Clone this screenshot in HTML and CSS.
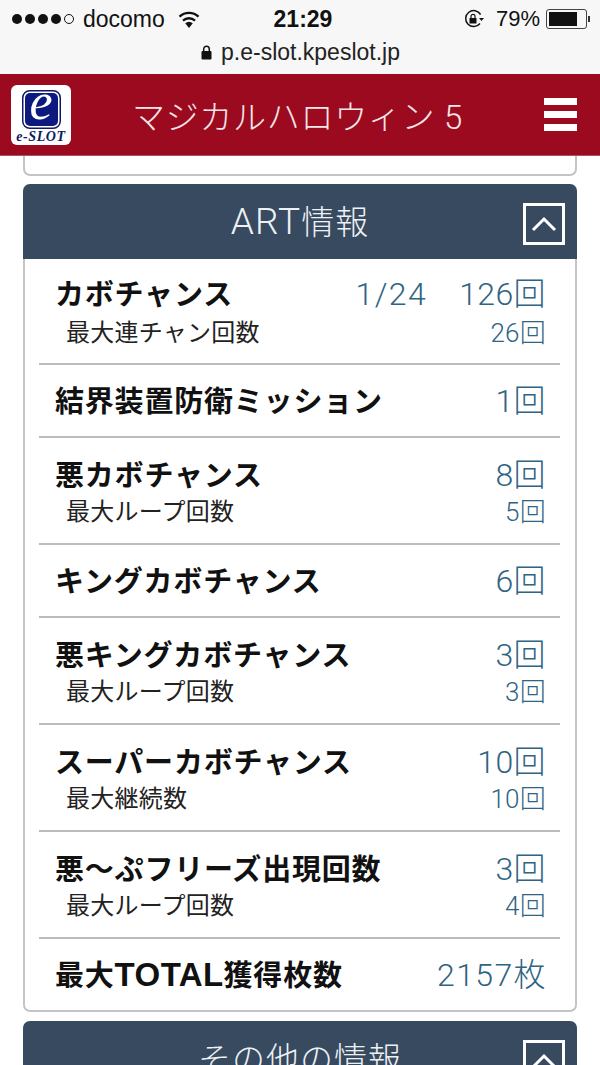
FILE: index.html
```html
<html>
	<head>
		<meta charset="utf-8">
		<link rel="stylesheet" href="styles.css">
	</head>
	<body>
		<div class="status">
			<div class="status-left">
				<span class="dots"><i></i><i></i><i></i><i></i><i class="off"></i></span>
				<span>docomo</span>
				<svg class="wifi" width="24" height="19" viewBox="0 0 22 18">
					<path d="M11 17 L7.4 12.6 A5.6 5.6 0 0 1 14.6 12.6 Z" fill="#111"/>
					<path d="M5.3 10 A8.6 8.6 0 0 1 16.7 10" fill="none" stroke="#111" stroke-width="2.2"/>
					<path d="M2 6.2 A13.4 13.4 0 0 1 20 6.2" fill="none" stroke="#111" stroke-width="2.2"/>
				</svg>
			</div>
			<div class="clock">21:29</div>
			<div class="status-right">
				<svg class="lock-rot" width="22" height="22" viewBox="0 0 22 22">
					<path d="M17 15.5 A8 8 0 1 1 17.6 6.5" fill="none" stroke="#111" stroke-width="1.5"/>
					<path d="M16 10 L21 10 L18.5 13 Z" fill="#111"/>
					<rect x="6.5" y="10" width="7" height="5.5" fill="#111"/>
					<path d="M8 10 V8.3 A2 2 0 0 1 12 8.3 V10" fill="none" stroke="#111" stroke-width="1.2"/>
				</svg>
				<span>79%</span>
				<div class="battery"><div class="battery-fill"></div></div>
				<div class="battery-tip"></div>
			</div>
		</div>
		<div class="url">
			<svg width="11" height="15" viewBox="0 0 11 15">
				<rect x="0.5" y="6" width="10" height="8.5" rx="1" fill="#111"/>
				<path d="M2.7 6 V4 A2.8 2.8 0 0 1 8.3 4 V6" fill="none" stroke="#111" stroke-width="1.5"/>
			</svg>
			<span>p.e-slot.kpeslot.jp</span>
		</div>
		<div class="topbar">
			<div class="logo">
				<svg class="logo-mark" width="39" height="39" viewBox="0 0 39 39">
					<rect x="0.75" y="0.75" width="37.5" height="37.5" rx="7" fill="#fff" stroke="#0c1a60" stroke-width="1.5"/>
					<rect x="3" y="3" width="33" height="33" rx="5" fill="#0c1a80"/>
					<text class="logo-e" x="19" y="29">e</text>
				</svg>
				<div class="logo-text">e-SLOT</div>
			</div>
			<div class="topbar-title">マジカルハロウィン 5</div>
			<div class="menu"><i></i><i></i><i></i></div>
		</div>
		<div class="content">
			<div class="prev-panel"></div>
			<div class="panel">
				<div class="panel-head">
					<span><span class="head-latin">ART</span>情報</span>
					<div class="toggle"><svg width="28" height="18" viewBox="0 0 28 18"><path d="M3 15 L14 4 L25 15" fill="none" stroke="#fff" stroke-width="3"/></svg></div>
				</div>
				<div class="rows">
					<div class="row first">
						<div class="line"><b>カボチャンス</b><span class="val"><span class="num prob">1/24</span>126回</span></div>
						<div class="sub"><span>最大連チャン回数</span><span class="subval">26回</span></div>
					</div>
					<div class="row single">
						<div class="line"><b>結界装置防衛ミッション</b><span class="val">1回</span></div>
					</div>
					<div class="row double">
						<div class="line"><b>悪カボチャンス</b><span class="val">8回</span></div>
						<div class="sub"><span>最大ループ回数</span><span class="subval">5回</span></div>
					</div>
					<div class="row single">
						<div class="line"><b>キングカボチャンス</b><span class="val">6回</span></div>
					</div>
					<div class="row double">
						<div class="line"><b>悪キングカボチャンス</b><span class="val">3回</span></div>
						<div class="sub"><span>最大ループ回数</span><span class="subval">3回</span></div>
					</div>
					<div class="row double">
						<div class="line"><b>スーパーカボチャンス</b><span class="val">10回</span></div>
						<div class="sub"><span>最大継続数</span><span class="subval">10回</span></div>
					</div>
					<div class="row double">
						<div class="line"><b>悪～ぷフリーズ出現回数</b><span class="val">3回</span></div>
						<div class="sub"><span>最大ループ回数</span><span class="subval">4回</span></div>
					</div>
					<div class="row last">
						<div class="line"><b>最大<span class="total">TOTAL</span>獲得枚数</b><span class="val"><span class="num">2157</span>枚</span></div>
					</div>
				</div>
			</div>
			<div class="panel">
				<div class="panel-head">
					<span>その他の情報</span>
					<div class="toggle"><svg width="28" height="18" viewBox="0 0 28 18"><path d="M3 15 L14 4 L25 15" fill="none" stroke="#fff" stroke-width="3"/></svg></div>
				</div>
			</div>
		</div>
	</body>
</html>
```

FILE: styles.css
```css
*{
	margin: 0;
	padding: 0;
	box-sizing: border-box;
}
html, body{
	width: 600px;
	height: 1065px;
	overflow: hidden;
	background: #fff;
	font-family: Roboto, "Noto Sans CJK JP", "Liberation Sans", sans-serif;
	color: #111;
}

/* phone chrome */
.status{
	height: 38px;
	background: #f7f7f7;
	display: flex;
	align-items: center;
	padding: 0 10px 0 12px;
	font-family: "Liberation Sans", sans-serif;
	font-size: 23px;
}
.status-left, .status-right{
	display: flex;
	align-items: center;
}
.status-left{
	width: 256px;
}
.dots{
	display: flex;
	gap: 3px;
	margin-right: 9px;
}
.dots i{
	width: 10px;
	height: 10px;
	border-radius: 50%;
	background: #111;
}
.dots i.off{
	background: none;
	border: 1px solid #111;
}
.wifi{
	margin-left: 12px;
}
.clock{
	font-weight: bold;
	font-size: 23px;
	width: 70px;
	text-align: center;
}
.status-right{
	margin-left: auto;
	font-size: 22px;
}
.lock-rot{
	margin-right: 11px;
}
.battery{
	width: 41px;
	height: 20px;
	border: 1px solid #444;
	border-radius: 3px;
	padding: 2px;
	margin-left: 6px;
}
.battery-fill{
	width: 79%;
	height: 100%;
	background: #111;
}
.battery-tip{
	width: 2px;
	height: 6px;
	background: #333;
	margin-left: 1px;
}
.url{
	height: 36px;
	background: #f7f7f7;
	display: flex;
	align-items: center;
	justify-content: center;
	gap: 9px;
	padding: 0 0 8px 1px;
	font-family: "Liberation Sans", sans-serif;
	font-size: 23px;
	color: #222;
}

/* red bar */
.topbar{
	height: 82px;
	background: #9c0a1f;
	display: flex;
	align-items: center;
	border-bottom: 1px solid #a8525e;
	padding: 0 23px 0 11px;
}
.logo{
	width: 60px;
	height: 60px;
	background: #fff;
	border-radius: 6px;
	display: flex;
	flex-direction: column;
	align-items: center;
	padding-top: 5px;
	flex-shrink: 0;
}
.logo-mark{
	display: block;
	flex-shrink: 0;
	overflow: visible;
}
.logo-e{
	fill: #fff;
	font-family: "Liberation Serif", serif;
	font-style: italic;
	font-size: 52px;
	text-anchor: middle;
}
.logo-text{
	font-family: "Liberation Serif", serif;
	font-style: italic;
	font-weight: bold;
	font-size: 14px;
	letter-spacing: 0.6px;
	color: #0c1a60;
	margin-top: 2px;
	line-height: 12px;
	white-space: nowrap;
}
.topbar-title{
	flex: 1;
	color: #f4e6e8;
	font-size: 33px;
	font-weight: 300;
	text-align: center;
	letter-spacing: 0.7px;
	padding-right: 20px;
	white-space: nowrap;
}
.menu{
	width: 33px;
	display: flex;
	flex-direction: column;
	gap: 6px;
	flex-shrink: 0;
}
.menu i{
	display: block;
	height: 7px;
	background: #fff;
}

/* panels */
.content{
	padding: 0 23px;
}
.prev-panel{
	height: 20px;
	border: 2px solid #c4c4c4;
	border-top: none;
	border-radius: 0 0 7px 7px;
	margin-bottom: 8px;
}
.panel{
	border: 2px solid #c4c4c4;
	border-top: none;
	border-radius: 7px;
	margin-bottom: 9px;
	background: #fff;
}
.panel-head{
	height: 75px;
	background: #374a60;
	border-radius: 7px 7px 0 0;
	color: #eef1f4;
	font-size: 33px;
	font-weight: 300;
	letter-spacing: 1px;
	display: flex;
	align-items: center;
	justify-content: center;
	position: relative;
	margin: 0 -2px;
	padding-bottom: 4px;
}
.head-latin{
	font-size: 37px;
}
.toggle{
	position: absolute;
	right: 12px;
	top: 19px;
	width: 42px;
	height: 42px;
	border: 3px solid #fff;
	display: flex;
	align-items: center;
	justify-content: center;
}
.rows{
	padding: 0 15px 0 14px;
}
.row{
	border-bottom: 2px solid #bcbcbc;
	padding: 0 14px 0 16px;
}
.row.double{
	height: 107px;
	padding-top: 15px;
}
.row.single{
	height: 73px;
	padding-top: 14px;
}
.row.first{
	height: 106px;
	padding-top: 13px;
}
.row.last{
	height: 71px;
	border-bottom: none;
	padding-top: 14px;
}
.line{
	display: flex;
	justify-content: space-between;
	align-items: center;
	height: 40px;
	white-space: nowrap;
}
.line b{
	font-family: "Liberation Sans", "Noto Sans CJK JP", sans-serif;
	font-size: 29px;
	font-weight: bold;
	color: #111;
	letter-spacing: 0.8px;
}
.total{
	font-size: 33px;
	letter-spacing: 0.4px;
}
.val{
	font-size: 32px;
	font-weight: 300;
	letter-spacing: 0.4px;
	padding-bottom: 3px;
	color: #2f6482;
}
.num{
	letter-spacing: 1.4px;
}
.prob{
	margin-right: 32px;
}
.sub{
	display: flex;
	justify-content: space-between;
	align-items: center;
	height: 34px;
	margin-top: -1px;
	padding-left: 11px;
	font-size: 24px;
	font-weight: 400;
	letter-spacing: 0.25px;
	color: #222;
}
.row.first .sub{
	margin-top: 1px;
}
.subval{
	font-size: 26px;
	font-weight: 300;
	color: #2f6482;
}
```
